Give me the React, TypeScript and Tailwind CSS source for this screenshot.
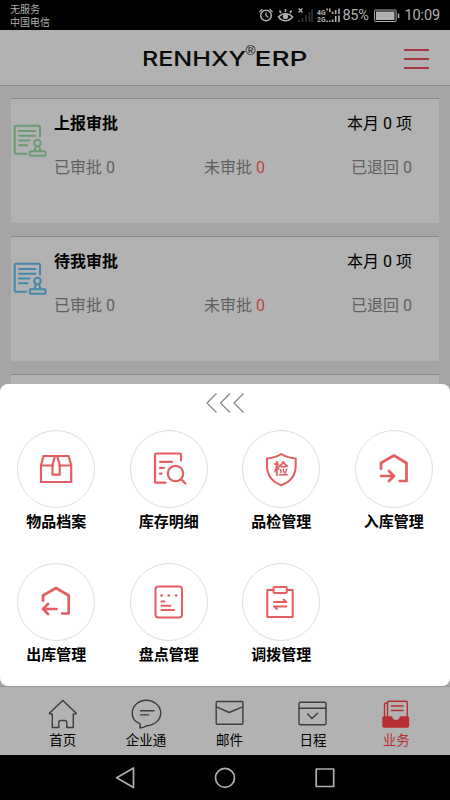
import React from 'react';

interface ApprovalCard {
  title: string;
  color: string;
}

interface MenuItem {
  label: string;
  icon: React.ReactNode;
}

const cards: ApprovalCard[] = [
  { title: '上报审批', color: 'text-[#6a9c76]' },
  { title: '待我审批', color: 'text-[#4388a6]' },
];

function MenuIcon({ children }: { children: React.ReactNode }) {
  return (
    <svg width="40" height="40" viewBox="0 0 40 40" fill="none" stroke="#e35f62" strokeWidth="2.2" strokeLinecap="round" strokeLinejoin="round">
      {children}
    </svg>
  );
}

const menuItems: MenuItem[] = [
  {
    label: '物品档案',
    icon: (
      <MenuIcon>
        <path d="M5 16 7.500 7h25l2.700 9v17H5zM5 16.500h12M23.500 16.500h11.700" strokeLinejoin="miter" />
        <path d="M18.800 7.500l-2.300 8.500v9.700h7.200V16l-2.300-8.500" strokeLinejoin="miter" />
      </MenuIcon>
    ),
  },
  {
    label: '库存明细',
    icon: (
      <MenuIcon>
        <path d="M32 11.500V6Q32 4.500 30.500 4.500h-23Q6 4.500 6 6v26.200Q6 33.700 7.500 33.700h9" />
        <path d="M11 12.800h12M11 18.800h4M11 24.700h1.500" />
        <circle cx="26.500" cy="24.500" r="7.700" />
        <path d="M32 30l4.500 4.500" />
      </MenuIcon>
    ),
  },
  {
    label: '品检管理',
    icon: (
      <MenuIcon>
        <path d="M20.300 5C16 8 11 9 6 9.500v7c0 9.500 5.500 16.500 14.300 19.700 8.800-3.200 14.400-10.200 14.400-19.700v-7C29.500 9 24.500 8 20.300 5z" strokeWidth="2" />
        <text x="20.300" y="25.300" textAnchor="middle" fontSize="15" fontWeight="700" fill="#e35f62" stroke="none">检</text>
      </MenuIcon>
    ),
  },
  {
    label: '入库管理',
    icon: (
      <MenuIcon>
        <path d="M7 19.500v-5.500L19.900 6.500 32.500 14v18h-6.500" strokeWidth="2.700" strokeLinecap="square" />
        <path d="M7 27h12.500M15 22l5 5-5 5" strokeWidth="2.700" />
      </MenuIcon>
    ),
  },
  {
    label: '出库管理',
    icon: (
      <MenuIcon>
        <path d="M7 18.500v-5L20 6 32.700 13.500v18H26.500" strokeWidth="2.700" strokeLinecap="square" />
        <path d="M20.500 27H7.500M12 22l-5 5 5 5" strokeWidth="2.700" />
      </MenuIcon>
    ),
  },
  {
    label: '盘点管理',
    icon: (
      <MenuIcon>
        <rect x="6.500" y="4.500" width="26.500" height="31" rx="3" strokeWidth="2" />
        <path d="M12.500 13.500h.200M19.700 13.500h.200M27 13.500h.200" strokeWidth="2.600" />
        <path d="M12.500 19.500h3M12.500 23.800h9M12.500 28h12.500" strokeWidth="2" />
      </MenuIcon>
    ),
  },
  {
    label: '调拨管理',
    icon: (
      <MenuIcon>
        <path d="M12.500 8H6.300v27h25.400V8h-6" strokeWidth="2" />
        <rect x="12.500" y="5" width="13.300" height="6" rx="1" strokeWidth="2" />
        <path d="M13 20h12.500l-3-2.500M25.500 24.500H13l3 2.500" strokeWidth="1.900" />
      </MenuIcon>
    ),
  },
];

function TabIcon({ children }: { children: React.ReactNode }) {
  return (
    <svg width="32" height="32" viewBox="0 0 32 32" fill="none" stroke="currentColor" strokeWidth="1.4" strokeLinejoin="round" strokeLinecap="round">
      {children}
    </svg>
  );
}

const tabs: MenuItem[] = [
  {
    label: '首页',
    icon: (
      <TabIcon>
        <path d="M15.800 3.500 2.300 16.200q-.200 1 3 .800V30.500h6.500v-5q0-2 2-2h4q2 0 2 2v5h6.500V17q3.300.200 3-.800z" />
      </TabIcon>
    ),
  },
  {
    label: '企业通',
    icon: (
      <TabIcon>
        <path d="M9.300 26.300C4.500 24.500 2.200 20.500 2.200 16.300 2.200 9 8.500 3.300 16.300 3.300S30.700 9 30.700 16 24.800 28 17 28.700c-2.200 1.500-4.700 2.300-7.200 2.300.900-1.500.800-3.100-.5-4.700z" />
        <path d="M10.500 13.800H24M10.500 17.900h8" />
      </TabIcon>
    ),
  },
  {
    label: '邮件',
    icon: (
      <TabIcon>
        <rect x="3.200" y="4.500" width="26.700" height="22.700" rx="1" />
        <path d="M3.500 9.800 16.200 15.500l13.300-5.700" />
      </TabIcon>
    ),
  },
  {
    label: '日程',
    icon: (
      <TabIcon>
        <rect x="2" y="5.300" width="27" height="22.500" rx="1.500" />
        <path d="M2.200 11.300h26.600M10.700 17l4.200 4.500 5.800-5.300" />
      </TabIcon>
    ),
  },
  {
    label: '业务',
    icon: (
      <TabIcon>
        <path d="M7.500 19.500V5.500q0-1.300 1.300-1.300h17.200q1.300 0 1.300 1.300v14" />
        <path d="M7.500 6h-1q-2 0-2 2V19.500M11.500 9h11.500M11.500 13.500h11.500" />
        <path d="M4 20h7.500q1 3.700 4.500 3.700t4.500-3.700H27.500q1 0 1 1V28.500q0 1.500-1.500 1.500h-22.500Q3 30 3 28.500v-7.500q0-1 1-1z" fill="currentColor" />
      </TabIcon>
    ),
  },
];

function StatusBar() {
  return (
    <div className="flex h-[30px] shrink-0 items-center justify-between bg-black pl-[10px] pr-[10px] text-[#b0b0b0]">
      <div className="pt-[2px] text-[10px] leading-[13.500px]">
        <div>无服务</div>
        <div>中国电信</div>
      </div>
      <div className="flex items-center pt-0.5">
        <svg width="84" height="18" viewBox="0 0 84 18" fill="none" stroke="currentColor" strokeWidth="1.500">
          <circle cx="8" cy="8.500" r="5.300" />
          <path d="M8 5.500v3.200l2.500 1.500M1.500 5 4.500 2M14.500 5l-3-3" strokeWidth="1.300" />
          <path d="M20.500 10c3.500-4.500 10.500-4.500 14 0-3.500 5-10.500 5-14 0zM27.500 5V2M23 6l-1.500-2.500M32 6l1.500-2.500" strokeWidth="1.500" />
          <circle cx="27.500" cy="9.500" r="2.600" fill="currentColor" stroke="none" />
          <path d="M40.500 1.500l4 4M44.500 1.500l-4 4" strokeWidth="1.200" />
          <path d="M41 15v-2M44.500 15v-4M48 15V8M51.500 15V5M54 15V2.500" stroke="#383838" strokeWidth="1.500" />
          <text x="59" y="7.500" fontSize="7.500" fontWeight="700" textLength="8.500" lengthAdjust="spacingAndGlyphs" fill="currentColor" stroke="none">4G</text>
          <text x="59" y="15" fontSize="7.500" fontWeight="700" textLength="8.500" lengthAdjust="spacingAndGlyphs" fill="currentColor" stroke="none">2G</text>
          <path d="M69 3.500V1.500M71.800 5V1.500M74.600 7V4.500M77.700 7V3M81 7V1.500M69 15v-1.500M71.800 15v-1.500M74.600 15v-2.500M77.700 15V9M81 15V8.500" strokeWidth="1.600" />
        </svg>
        <span className="mr-px w-[27px] whitespace-nowrap text-[14.500px] leading-[18px] tracking-[-0.2px]">85%</span>
        <svg className="ml-1" width="26" height="14" viewBox="0 0 26 14" fill="none" stroke="currentColor">
          <rect x=".600" y="1" width="21.500" height="11.500" rx="1" />
          <rect x="2" y="2.500" width="18.500" height="8.500" fill="currentColor" stroke="none" />
          <path d="M24.500 4.500v4.500" strokeWidth="1.500" />
        </svg>
        <span className="ml-1 text-[14.500px] leading-[18px] tracking-[-0.1px]">10:09</span>
      </div>
    </div>
  );
}

function Header() {
  return (
    <header className="flex h-14 shrink-0 items-center justify-between border-b border-[#8e8e8e] bg-[#b2b2b2] pl-[143px] pr-[21px]">
      <svg width="165" height="28" viewBox="0 0 165 28" fill="#0a0a0a" fontFamily="Inter, sans-serif">
        <text x="-1" y="22.300" fontSize="20.500" fontWeight="500" textLength="104" lengthAdjust="spacingAndGlyphs">RENHXY</text>
        <text x="102.500" y="10.500" fontFamily="Liberation Sans, sans-serif" fontSize="12" textLength="10" lengthAdjust="spacingAndGlyphs">®</text>
        <text x="111.500" y="22.300" fontSize="20.500" fontWeight="500" textLength="53" lengthAdjust="spacingAndGlyphs">ERP</text>
      </svg>
      <div className="flex w-[25px] flex-col gap-[7px] pt-[2px]">
        <span className="h-0.5 bg-[#a83840]" />
        <span className="h-0.5 bg-[#a83840]" />
        <span className="h-0.5 bg-[#a83840]" />
      </div>
    </header>
  );
}

function Card({ title, color }: ApprovalCard) {
  return (
    <section className="flex h-[125px] shrink-0 border-t border-[#8a8a8a] bg-[#b2b2b2] pl-0.5 pr-[27px] text-[16px] leading-6">
      <svg className={`mt-[25px] shrink-0 ${color}`} width="34" height="34" viewBox="0 0 34 34" fill="none" stroke="currentColor" strokeWidth="2" strokeLinejoin="round" strokeLinecap="round">
        <path d="M27 12.500V3q0-1.300-1.300-1.300H3Q1.700 1.700 1.700 3v25.500q0 1.300 1.300 1.300h10.500" />
        <path d="M6 7h16.500M6 11.800h16.500M6 16.600h10.500M6 21.300h8.500" />
        <circle cx="24.500" cy="19" r="3.200" />
        <path d="M23 22l-1.500 5M26 22l1.500 5" />
        <rect x="16.800" y="27.300" width="15.700" height="4.500" rx="1" />
      </svg>
      <div className="ml-[7px] flex-1">
        <div className="mt-[13px] flex justify-between text-black">
          <h2 className="font-bold">{title}</h2>
          <span>本月 0 项</span>
        </div>
        <div className="mt-5 flex justify-between text-[#606060]">
          <span>已审批 0</span>
          <span className="ml-[3px]">未审批 <span className="text-[#bd4444]">0</span></span>
          <span>已退回 0</span>
        </div>
      </div>
    </section>
  );
}

function BusinessSheet() {
  return (
    <div className="absolute inset-x-0 top-[384px] h-[302px] rounded-lg bg-white">
      <div className="flex h-[46px] justify-center pr-px pt-2">
        <svg width="40" height="22" viewBox="0 0 40 22" fill="none" stroke="#858585" strokeWidth="1.200">
          <path d="M11.500 1.500 2 11l9.500 9.500M25 1.500 15.500 11l9.500 9.500M38.500 1.500 29 11l9.500 9.500" />
        </svg>
      </div>
      <div className="grid grid-cols-4">
        {menuItems.map((item) => (
          <button key={item.label} className="flex h-[132.500px] flex-col items-center">
            <span className="flex size-[78px] items-center justify-center rounded-full border border-[#dedede]">{item.icon}</span>
            <span className="mt-[3px] text-[15px] font-bold leading-[22px] text-black">{item.label}</span>
          </button>
        ))}
      </div>
    </div>
  );
}

function TabBar() {
  return (
    <nav className="grid h-[69px] shrink-0 grid-cols-5 border-t border-[#999] bg-[#b2b2b2] pl-[21px] pr-[12px]">
      {tabs.map((tab) => (
        <a
          key={tab.label}
          className={
            tab.label === '业务'
              ? 'flex flex-col items-center pt-[10px] text-[#b72f32]'
              : 'flex flex-col items-center pt-[10px] text-[#3d3d3d]'
          }
        >
          {tab.icon}
          <span className={tab.label === '业务' ? 'text-[13.500px] leading-[22px]' : 'text-[13.500px] leading-[22px] text-black'}>{tab.label}</span>
        </a>
      ))}
    </nav>
  );
}

function SystemNav() {
  return (
    <div className="flex h-[45px] shrink-0 items-center justify-center gap-[76px] bg-black">
      <svg width="24" height="24" viewBox="0 0 24 24" fill="none" stroke="#b0b0b0" strokeWidth="1.700" strokeLinejoin="round">
        <path d="M20.500 2v19.500L3.700 11.700z" />
      </svg>
      <svg width="24" height="24" viewBox="0 0 24 24" fill="none" stroke="#b0b0b0" strokeWidth="1.700">
        <circle cx="12" cy="11.800" r="9.500" />
      </svg>
      <svg width="24" height="24" viewBox="0 0 24 24" fill="none" stroke="#b0b0b0" strokeWidth="1.700" strokeLinejoin="round">
        <rect x="3.200" y="3" width="17.500" height="17.500" />
      </svg>
    </div>
  );
}

export default function App() {
  return (
    <div className="relative flex h-[800px] w-[450px] flex-col overflow-hidden bg-[#a5a5a5] font-[Roboto,'Noto_Sans_CJK_SC',sans-serif]">
      <StatusBar />
      <Header />
      <main className="flex min-h-0 flex-1 flex-col gap-[13px] overflow-hidden px-[11px] pt-[12px]">
        {cards.map((card) => (
          <Card key={card.title} {...card} />
        ))}
        <section className="h-[125px] shrink-0 border-t border-[#8a8a8a] bg-[#b2b2b2]" />
      </main>
      <TabBar />
      <SystemNav />
      <BusinessSheet />
    </div>
  );
}
